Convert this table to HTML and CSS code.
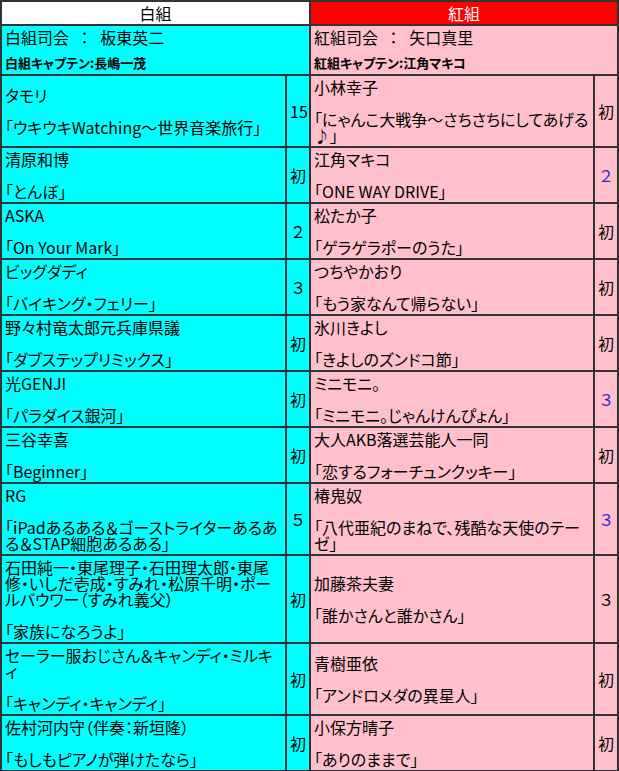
FILE: index.html
```html
<!DOCTYPE html>
<html lang="ja">
<head>
<meta charset="utf-8">
<title>紅白</title>
<link rel="stylesheet" href="styles.css">
</head>
<body>
<table class="board">
  <colgroup>
    <col class="col-name-l">
    <col class="col-num">
    <col class="col-name-r">
    <col class="col-num">
  </colgroup>
  <tr class="head">
    <th colspan="2" class="team-white">白組</th>
    <th colspan="2" class="team-red">紅組</th>
  </tr>
  <tr>
    <td colspan="2" class="host white">
      <div class="host-main">白組司会 ： 板東英二</div>
      <div class="host-sub">白組キャプテン:長嶋一茂</div>
    </td>
    <td colspan="2" class="host red">
      <div class="host-main">紅組司会 ： 矢口真里</div>
      <div class="host-sub">紅組キャプテン:江角マキコ</div>
    </td>
  </tr>
  <tr>
    <td class="entry white"><div class="artist">タモリ</div><div class="song">「ウキウキWatching～世界音楽旅行」</div></td>
    <td class="num white">15</td>
    <td class="entry red"><div class="artist">小林幸子</div><div class="song">「にゃんこ大戦争～さちさちにしてあげる<br>♪」</div></td>
    <td class="num red">初</td>
  </tr>
  <tr>
    <td class="entry white"><div class="artist">清原和博</div><div class="song">「とんぼ」</div></td>
    <td class="num white">初</td>
    <td class="entry red"><div class="artist">江角マキコ</div><div class="song">「ONE WAY DRIVE」</div></td>
    <td class="num red blue">２</td>
  </tr>
  <tr>
    <td class="entry white"><div class="artist">ASKA</div><div class="song">「On Your Mark」</div></td>
    <td class="num white">２</td>
    <td class="entry red"><div class="artist">松たか子</div><div class="song">「ゲラゲラポーのうた」</div></td>
    <td class="num red">初</td>
  </tr>
  <tr>
    <td class="entry white"><div class="artist">ビッグダディ</div><div class="song">「バイキング・フェリー」</div></td>
    <td class="num white">３</td>
    <td class="entry red"><div class="artist">つちやかおり</div><div class="song">「もう家なんて帰らない」</div></td>
    <td class="num red">初</td>
  </tr>
  <tr>
    <td class="entry white"><div class="artist">野々村竜太郎元兵庫県議</div><div class="song">「ダブステップリミックス」</div></td>
    <td class="num white">初</td>
    <td class="entry red"><div class="artist">氷川きよし</div><div class="song">「きよしのズンドコ節」</div></td>
    <td class="num red">初</td>
  </tr>
  <tr>
    <td class="entry white"><div class="artist">光GENJI</div><div class="song">「パラダイス銀河」</div></td>
    <td class="num white">初</td>
    <td class="entry red"><div class="artist">ミニモニ。</div><div class="song">「ミニモニ。じゃんけんぴょん」</div></td>
    <td class="num red blue">３</td>
  </tr>
  <tr>
    <td class="entry white"><div class="artist">三谷幸喜</div><div class="song">「Beginner」</div></td>
    <td class="num white">初</td>
    <td class="entry red"><div class="artist">大人AKB落選芸能人一同</div><div class="song">「恋するフォーチュンクッキー」</div></td>
    <td class="num red">初</td>
  </tr>
  <tr>
    <td class="entry white"><div class="artist">RG</div><div class="song">「iPadあるある＆ゴーストライターあるあ<br>る＆STAP細胞あるある」</div></td>
    <td class="num white">５</td>
    <td class="entry red"><div class="artist">椿鬼奴</div><div class="song">「八代亜紀のまねで、残酷な天使のテー<br>ゼ」</div></td>
    <td class="num red blue">３</td>
  </tr>
  <tr>
    <td class="entry white"><div class="artist">石田純一・東尾理子・石田理太郎・東尾<br>修・いしだ壱成・すみれ・松原千明・ポー<br>ルバウワー（すみれ義父）</div><div class="song">「家族になろうよ」</div></td>
    <td class="num white">初</td>
    <td class="entry red"><div class="artist">加藤茶夫妻</div><div class="song">「誰かさんと誰かさん」</div></td>
    <td class="num red">３</td>
  </tr>
  <tr>
    <td class="entry white"><div class="artist">セーラー服おじさん＆キャンディ・ミルキ<br>ィ</div><div class="song">「キャンディ・キャンディ」</div></td>
    <td class="num white">初</td>
    <td class="entry red"><div class="artist">青樹亜依</div><div class="song">「アンドロメダの異星人」</div></td>
    <td class="num red">初</td>
  </tr>
  <tr>
    <td class="entry white"><div class="artist">佐村河内守（伴奏：新垣隆）</div><div class="song">「もしもピアノが弾けたなら」</div></td>
    <td class="num white">初</td>
    <td class="entry red"><div class="artist">小保方晴子</div><div class="song">「ありのままで」</div></td>
    <td class="num red">初</td>
  </tr>
</table>
</body>
</html>
```

FILE: styles.css
```css
html, body {
  margin: 0;
  padding: 0;
  background: #ffffff;
}

.board {
  width: 619px;
  table-layout: fixed;
  border-collapse: separate;
  border-spacing: 0;
  border: 1px solid #333333;
  font-family: "Noto Sans CJK JP", "Noto Sans", sans-serif;
  font-size: 16px;
  line-height: 16px;
  color: #000000;
  font-feature-settings: "palt";
}

.col-name-l { width: 285px; }
.col-name-r { width: 284px; }
.col-num { width: 24px; }

.board th,
.board td {
  border: 1px solid #333333;
  padding: 3px;
  vertical-align: middle;
}

.board th {
  font-weight: normal;
  text-align: center;
}

.team-white {
  background: #ffffff;
  color: #000000;
}

.team-red {
  background: #ff0000;
  color: #ffffff;
}

.white { background: #00ffff; }
.red { background: #ffc0cb; }

.host {
  text-align: left;
}

.host-main {
  font-feature-settings: normal;
  word-spacing: 4px;
  white-space: nowrap;
}

.host-sub {
  margin-top: 10px;
  font-size: 13px;
  font-weight: bold;
  white-space: nowrap;
}

.entry {
  text-align: left;
}

.artist,
.song {
  white-space: nowrap;
}

.song {
  margin-top: 16px;
}

.num {
  text-align: center;
  padding-left: 0;
  padding-right: 0;
}

.blue {
  color: #3322cc;
}
```
